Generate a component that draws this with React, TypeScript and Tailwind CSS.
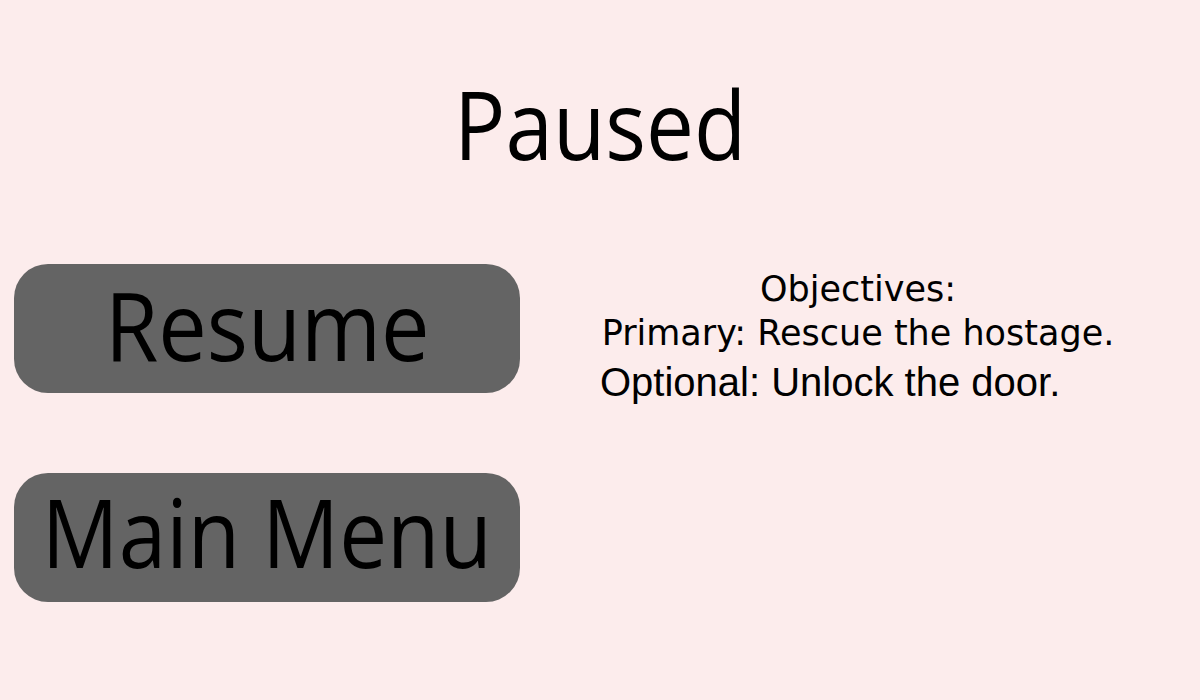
import React from "react";

// Pause overlay: title, two menu buttons and the objective list
export default function App() {
    const buttonClass =
        "flex items-center justify-center w-[506px] h-[129px] rounded-[34px] bg-[#646464] text-black text-[96px] leading-none";

    return (
        <div className="w-[1200px] h-[700px] bg-[#fcecec] overflow-hidden font-['Open_Sans',sans-serif]">
            <h1 className="pt-[63px] text-center text-[96px] leading-[120px] text-black">
                <span className="inline-block scale-x-[0.89]">Paused</span>
            </h1>
            <div className="flex mt-[81px]">
                <div className="flex flex-col gap-[80px] pl-[14px]">
                    <button className={buttonClass}>
                        <span className="inline-block -mt-[10px] scale-x-[0.9]">Resume</span>
                    </button>
                    <button className={buttonClass}>
                        <span className="inline-block -mt-[14px] whitespace-nowrap scale-x-[0.89]">Main Menu</span>
                    </button>
                </div>
                <div className="flex flex-col items-center w-[516px] ml-[80px] mt-[3px] text-black">
                    <p className="text-[35px] leading-[44px] font-['DejaVu_Sans',sans-serif]">Objectives:</p>
                    <p className="text-[35px] leading-[44px] font-['DejaVu_Sans',sans-serif]">Primary: Rescue the hostage.</p>
                    <p className="self-start mt-[4px] text-[40px] leading-[46px] font-['Liberation_Sans',sans-serif]">Optional: Unlock the door.</p>
                </div>
            </div>
        </div>
    );
}
